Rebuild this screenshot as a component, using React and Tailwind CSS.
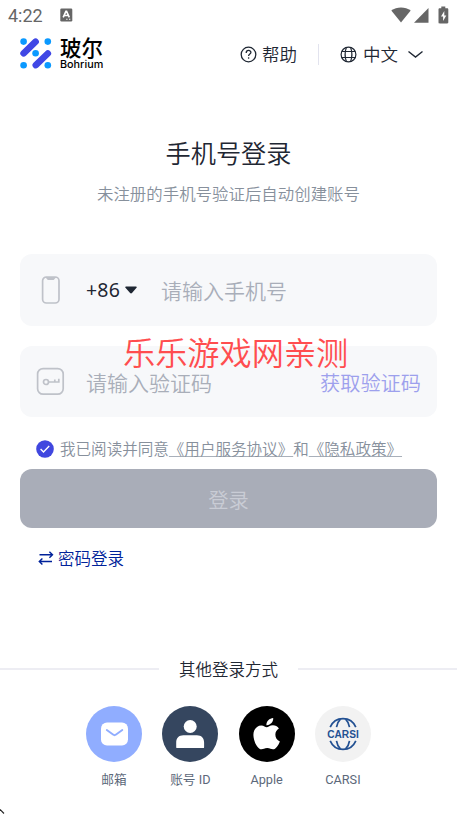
import React from 'react';

const StatusBar = () => (
  <div className="flex h-[30px] items-center pl-2 pr-[8px] text-[#666666]">
    <span className="mt-[2px] font-[Roboto] text-[18px] font-normal leading-[30px]">4:22</span>
    <svg className="ml-[17px]" width="13" height="14" viewBox="0 0 13 14">
      <rect x="0.3" y="0.5" width="12" height="13" rx="1.2" fill="currentColor" />
      <path d="M3.2 9.3 5.9 3.3h.7l2.7 6M4.3 7.5h3.9" fill="none" stroke="#fff" strokeWidth="1.6" />
      <path d="M6.2 11.3h1.3M9 11.3h1.3" stroke="#fff" strokeWidth="1.1" />
    </svg>
    <div className="ml-auto flex items-center">
      <svg width="20" height="16" viewBox="0 0 20 16">
        <path d="M0.3 3.6C5.8-.7 14.2-.7 19.7 3.6L10 15.6Z" fill="currentColor" />
      </svg>
      <svg className="ml-[3px]" width="15" height="16" viewBox="0 0 15 16">
        <path d="M14.5 1v14.7H0Z" fill="currentColor" />
      </svg>
      <svg className="ml-[9px]" width="11" height="18" viewBox="0 0 11 18">
        <path d="M3.3 0.5h4v1.8h1.8c.8 0 1.2.4 1.2 1.1v12.8c0 .8-.4 1.2-1.2 1.2H1.7c-.8 0-1.2-.4-1.2-1.2V3.4c0-.7.4-1.1 1.2-1.1h1.6Z" fill="currentColor" />
        <path d="M6.3 5 3 10.4h2.1V15l3.2-5.6H6.3Z" fill="#fff" />
      </svg>
    </div>
  </div>
);

const Logo = () => (
  <div className="flex items-center">
    <svg width="32" height="32" viewBox="0 0 32 32">
      <g fill="#0a99ff">
        <circle cx="3.6" cy="3.6" r="3.3" />
        <circle cx="27.8" cy="3.6" r="3.3" />
        <circle cx="15.6" cy="15.3" r="3.3" />
        <circle cx="3.6" cy="27.2" r="3.3" />
        <circle cx="27.8" cy="27.2" r="3.3" />
      </g>
      <path d="M3.6 15.3 15.6 3.7M15.8 27.1 27.8 15.5" stroke="#4047e5" strokeWidth="6.6" strokeLinecap="round" />
    </svg>
    <div className="ml-2 flex flex-col text-black">
      <span className="h-[21px] text-[21.5px] font-medium leading-[19px]">玻尔</span>
      <span className="h-[13px] font-[Inter] text-[10.8px] font-medium leading-[14px]">Bohrium</span>
    </div>
  </div>
);

const Header = () => (
  <header className="flex h-12 items-center pl-5 text-[#1f2733]">
    <Logo />
    <div className="ml-auto flex items-center pr-[33px]">
      <svg width="17" height="17" viewBox="0 0 17 17" fill="none" stroke="currentColor" strokeWidth="1.3">
        <circle cx="8.5" cy="8.5" r="7.3" />
        <path d="M6.2 7c0-3.4 4.7-3.2 4.7-.6 0 1.6-2.3 1.7-2.3 3.6" />
        <path d="M8.6 11.3v1.4" />
      </svg>
      <span className="ml-[5px] text-[17.5px] leading-6">帮助</span>
      <span className="ml-[21px] h-[21px] w-px bg-[#e2e3ee]" />
      <svg className="ml-[21px]" width="17" height="17" viewBox="0 0 17 17" fill="none" stroke="currentColor" strokeWidth="1.2">
        <circle cx="8.5" cy="8.5" r="7.4" />
        <path d="M6.4 1.4C4.8 5.8 4.8 11.2 6.4 15.6M10.6 1.4c1.6 4.4 1.6 9.8 0 14.2M1.7 5.5h13.6M1.7 11.5h13.6" />
      </svg>
      <span className="ml-[6px] text-[17.5px] leading-6">中文</span>
      <svg className="ml-[9px]" width="17" height="9" viewBox="0 0 17 9" fill="none" stroke="currentColor" strokeWidth="1.4">
        <path d="M1.5 1.5 8.5 7l7-5.5" />
      </svg>
    </div>
  </header>
);

const PhoneField = () => (
  <div className="flex h-[72px] items-center rounded-xl bg-[#f7f8fa] pl-[21px]">
    <svg width="20" height="30" viewBox="0 0 20 30" fill="none" stroke="#bfc2c9" strokeWidth="1.7">
      <rect x="1.6" y="2" width="16.4" height="26" rx="3.8" />
      <path d="M6 2.8h7.5l-1.2 1.3H7.2Z" fill="#bfc2c9" />
    </svg>
    <span className="ml-[25px] w-[35px] font-['Noto_Sans'] text-[19.5px] font-normal tracking-[0.2px] text-[#1f2733]">+86</span>
    <svg className="ml-[4px]" width="12" height="8" viewBox="0 0 12 8">
      <path d="M1 .5h10c.8 0 1 .8.5 1.3L7 7c-.6.6-1.3.6-1.9 0L.5 1.8C0 1.3.2.5 1 .5Z" fill="#1f2733" />
    </svg>
    <span className="ml-6 mt-[2px] text-[21px] text-[#a9aeb9]">请输入手机号</span>
  </div>
);

const CodeField = () => (
  <div className="relative mt-5 flex h-[71px] items-center rounded-xl bg-[#f7f8fa] pl-4 pr-4">
    <svg width="29" height="29" viewBox="0 0 29 29" fill="none" stroke="#bfc2c9" strokeWidth="1.7">
      <rect x="1.6" y="1.6" width="25.6" height="25.6" rx="5.5" />
      <circle cx="10" cy="15" r="2.5" />
      <path d="M12.5 15h10.3v-3.2M18.8 15v-2.6" />
    </svg>
    <span className="ml-[21px] mt-[3px] text-[21px] text-[#a9aeb9]">请输入验证码</span>
    <span className="ml-auto mt-[3px] text-[20.2px] text-[#9da0ed]">获取验证码</span>
    <span className="absolute left-[103px] top-[-19px] whitespace-nowrap text-[32.2px] leading-[48px] text-[#ff4d4f]">乐乐游戏网亲测</span>
  </div>
);

const methods = [
  {
    name: '邮箱',
    bg: 'bg-[#90adff]',
    icon: (
      <svg width="56" height="56" viewBox="0 0 56 56">
        <rect x="15" y="16.5" width="27" height="23" rx="6" fill="#fff" />
        <path d="m20.8 24 6.2 4.6c1.1.8 2 .8 3.1 0l6.2-4.6" fill="none" stroke="#90adff" strokeWidth="1.9" strokeLinecap="round" />
      </svg>
    ),
  },
  {
    name: '账号 ID',
    bg: 'bg-[#35465f]',
    icon: (
      <svg width="56" height="56" viewBox="0 0 56 56" fill="#fff">
        <circle cx="28.2" cy="20.5" r="6.5" />
        <path d="M14.2 41.2v-4.7c0-4.4 2.7-7.2 7.2-7.2h13.5c4.5 0 7.2 2.8 7.2 7.2v4.7c0 .6-.3.9-.9.9H15.1c-.6 0-.9-.3-.9-.9Z" />
      </svg>
    ),
  },
  {
    name: 'Apple',
    bg: 'bg-black',
    icon: (
      <svg width="56" height="56" viewBox="0 0 56 56" fill="#fff">
        <path d="M34.2 12.1c.3 3.9-3 7.4-6.8 7.1-.3-3.5 3.2-7 6.8-7.1Z" />
        <path d="M27.6 21.3c1.7 0 3.2-2 6.3-2 2.4 0 4.6 1.2 6 3.2-5.2 3-4.5 10.7 1 12.9-1.3 3.6-4.1 7.9-6.9 7.9-2 0-2.9-1.3-5.8-1.3-2.8 0-3.8 1.3-5.7 1.3-4 0-8.1-8.3-8.1-14.2 0-6.3 4.1-9.7 7.9-9.7 2.6 0 4.1 1.9 5.3 1.9Z" />
      </svg>
    ),
  },
  {
    name: 'CARSI',
    bg: 'bg-[#f2f2f2]',
    icon: (
      <svg width="56" height="56" viewBox="0 0 56 56" fill="none" stroke="#225092" strokeWidth="1.7">
        <path d="M15.2 21.2C20 9.8 36 9.8 40.8 21.2M15.2 34.8C20 46.2 36 46.2 40.8 34.8" />
        <path d="M25.4 13.2c-2 2-3.4 4.7-3.9 8M30.6 13.2c2 2 3.4 4.7 3.9 8M21.5 34.8c.5 3.3 1.9 6 3.9 8M34.5 34.8c-.5 3.3-1.9 6-3.9 8" />
        <text x="28" y="31.9" textAnchor="middle" fill="#225092" stroke="none" fontFamily="Liberation Sans" fontWeight="700" fontSize="11.8" textLength="31.5" lengthAdjust="spacingAndGlyphs">CARSI</text>
      </svg>
    ),
  },
];

const OtherMethods = () => (
  <section className="mt-[84px]">
    <div className="flex h-[30px] items-center">
      <span className="h-[2px] flex-1 bg-[#ededf3]" />
      <span className="w-[139px] text-center text-[16.5px] text-[#1f2733]">其他登录方式</span>
      <span className="h-[2px] flex-1 bg-[#ededf3]" />
    </div>
    <div className="mt-[22px] flex justify-center gap-[20.3px]">
      {methods.map(m => (
        <div key={m.name} className="flex w-14 flex-col items-center">
          <div className={`h-14 w-14 rounded-full ${m.bg}`}>{m.icon}</div>
          <span className="mt-2 whitespace-nowrap font-[Roboto,'Noto_Sans_CJK_SC',sans-serif] text-[12.7px] font-normal leading-5 text-[#5c687a]">{m.name}</span>
        </div>
      ))}
    </div>
  </section>
);

const App = () => {
  return (
    <div className="relative h-[814px] w-[457px] overflow-hidden bg-white font-['Noto_Sans_CJK_SC',sans-serif] font-[350]">
      <StatusBar />
      <Header />

      <div className="mt-14 text-center">
        <h1 className="text-[25.2px] font-[350] leading-9 text-[#1f2733]">手机号登录</h1>
        <p className="mt-[11px] text-[16.45px] leading-6 text-[#87909c]">未注册的手机号验证后自动创建账号</p>
      </div>

      <main className="mt-[49px] px-5">
        <PhoneField />
        <CodeField />
        <div className="mt-[20px] flex h-6 items-center pl-4 text-[15.55px] text-[#87909c]">
          <svg width="18" height="18" viewBox="0 0 18 18">
            <circle cx="9" cy="9" r="8.8" fill="#4047df" />
            <path d="m4.6 9.1 2.9 2.8 5.7-5.8" fill="none" stroke="#fff" strokeWidth="1.4" />
          </svg>
          <span className="ml-[6px] whitespace-nowrap">
            我已阅读并同意<a className="underline decoration-[#a9b0ba] decoration-1 underline-offset-1">《用户服务协议》</a>和<a className="underline decoration-[#a9b0ba] decoration-1 underline-offset-1">《隐私政策》</a>
          </span>
        </div>
        <button className="mt-2 block h-[59px] w-full rounded-xl bg-[#a9adb8] pt-[2px] text-[20.3px] text-[#c9ccd5]">登录</button>
        <div className="mt-[18px] flex h-6 items-center pl-[18px] text-[16.5px] text-[#00229a]">
          <svg width="16" height="14" viewBox="0 0 16 14" fill="none" stroke="currentColor" strokeWidth="1.4">
            <path d="M1.5 3.8h13M11.4.8l3.1 3-3.1 3M14 10.5H1.3M4.4 7.5l-3.1 3 3.1 3" />
          </svg>
          <span className="ml-1">密码登录</span>
        </div>
      </main>

      <OtherMethods />

      {/* cursor tip at the corner */}
      <svg className="absolute left-0 top-[809px]" width="5" height="5" viewBox="0 0 5 5">
        <path d="M0 .5 4 4.5" stroke="#222" strokeWidth="1.1" />
      </svg>
    </div>
  );
};

export default App;
